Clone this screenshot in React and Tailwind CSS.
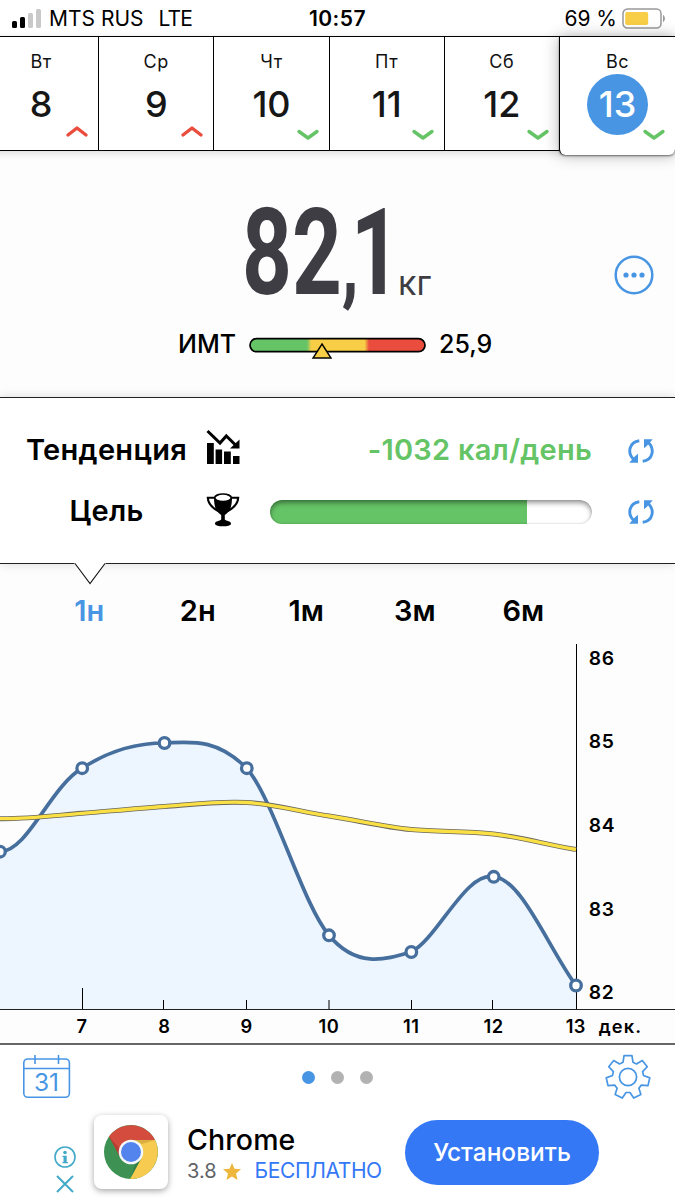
import React from "react";

const days = [
  { name: "Вт", num: "8", up: true },
  { name: "Ср", num: "9", up: true },
  { name: "Чт", num: "10" },
  { name: "Пт", num: "11" },
  { name: "Сб", num: "12" },
  { name: "Вс", num: "13", active: true },
];

const points = [
  [0, 851.7],
  [82.2, 768.2],
  [164.5, 743],
  [246.8, 768.2],
  [329, 935.3],
  [411.3, 952],
  [493.7, 876.8],
  [576, 985.5],
];

const curve =
  "M0,851.7 C28,851 50,787 82.2,768.2 C110,750 136,743 164.5,743 C192,742 216,738 246.8,768.2 C274,800 302,903 329,935.3 C356,968 384,960 411.3,952 C438,938 466,871 493.7,876.8 C521,878 548,947 576,985.5";

const trend =
  "M0,818.7 C28,819 55,815.5 82,813.3 C110,811 137,808.5 164.5,806.5 C192,804.3 219,801 246.7,802.5 C274,804 302,812 329,816 C356,820 384,827 411,829.5 C438,832 466,831 493.5,834 C521,837 548,845 576,849.5";

const gearPath = (() => {
  const out = [];
  for (let i = 0; i < 7; i++) {
    const mid = -90 + (i * 360) / 7;
    [
      [-18.5, 15.6],
      [-10.5, 21.8],
      [10.5, 21.8],
      [18.5, 15.6],
    ].forEach(([d, r]) => {
      const a = ((mid + d) * Math.PI) / 180;
      out.push(`${(24 + r * Math.cos(a)).toFixed(2)},${(24 + r * Math.sin(a)).toFixed(2)}`);
    });
  }
  return `M${out.join("L")}Z`;
})();

function StatusBar() {
  return (
    <header className="flex h-9 items-center justify-between bg-white pl-[11px] pr-[9px] pt-px">
      <div className="flex w-[280px] items-center">
        <svg width="32" height="20" viewBox="0 0 32 20">
          <rect x="1" y="12" width="5" height="7" rx="1.5" fill="#000" />
          <rect x="9" y="8" width="5" height="11" rx="1.5" fill="#000" />
          <rect x="17" y="4" width="5" height="15" rx="1.5" fill="#c9c9c9" />
          <rect x="25" y="0" width="5" height="19" rx="1.5" fill="#c9c9c9" />
        </svg>
        <span className="ml-1.5 whitespace-pre text-[21px]">MTS RUS</span>
        <span className="ml-[15px] text-[21px] tracking-[-0.8px]">LTE</span>
      </div>
      <span className="-translate-x-px text-[21px] font-semibold tracking-[0.5px]">10:57</span>
      <div className="flex w-[280px] items-center justify-end">
        <span className="text-[21px]">69 %</span>
        <svg className="ml-[5px]" width="44" height="22" viewBox="0 0 44 22">
          <rect x="1" y="1" width="38" height="19" rx="4.5" fill="#fff" stroke="#999" strokeWidth="1.5" />
          <rect x="3.2" y="4" width="23" height="13" rx="2" fill="#f7ce46" />
          <path d="M41.5,7.5 q2,3 0,6z" fill="#999" stroke="#999" />
        </svg>
      </div>
    </header>
  );
}

function DayCell({ day }) {
  return (
    <div
      className={
        day.active
          ? "relative z-10 -ml-px flex h-[118px] w-[116.2px] flex-col items-center rounded-b-md border-l border-black bg-white shadow-[0_1px_2px_rgba(0,0,0,0.5),0_0_16px_rgba(0,0,0,0.3)]"
          : "relative flex h-[113px] w-[115.2px] flex-col items-center border-r border-black bg-white"
      }
    >
      <span className="mt-[13px] h-6 text-[18px] leading-6 tracking-[0.6px] text-[#111]">{day.name}</span>
      <div
        className={
          day.active
            ? "flex size-[61px] items-center justify-center rounded-full bg-[#4896e3] text-[36px] font-medium text-white"
            : "flex size-[61px] items-center justify-center text-[36px] font-medium text-[#161616]"
        }
      >
        <span className="-translate-y-px">{day.num}</span>
      </div>
      <svg
        className={day.up ? "absolute right-[9px] top-[87px]" : "absolute right-[9px] top-[90px]"}
        width="24"
        height="14"
        viewBox="0 0 24 14"
        fill="none"
        strokeWidth="3.4"
        strokeLinecap="round"
        strokeLinejoin="round"
      >
        {day.up ? <path d="M3,11 L12,4 L21,11" stroke="#ea4d3d" /> : <path d="M3,4.5 L12,11 L21,4.5" stroke="#65c466" />}
      </svg>
    </div>
  );
}

function Refresh() {
  return (
    <svg width="26" height="24" viewBox="0 0 26 24" fill="none" stroke="#4896e3" strokeWidth="2.9">
      <path d="M11.3,1.7 C1,3 -1,14 5.7,20.5" />
      <path d="M14.7,22.3 C25,21 27,10 20.3,3.5" />
      <path d="M1.3,23.8 L10,23.8 L10,14.8 L7,17.3Z" fill="#4896e3" stroke="none" />
      <path d="M24.7,0.2 L16,0.2 L16,9.2 L19,6.7Z" fill="#4896e3" stroke="none" />
    </svg>
  );
}

function TrendIcon() {
  return (
    <svg width="34" height="36" viewBox="0 0 34 36">
      <path d="M1,14h6.8V35H1zM9.6,20.5h6.5V35H9.6zM18,22.5h6.8V35H18zM27,27h6.5V35H27z" />
      <path d="M1.5,2 L14,14 L20.3,7 L30,16.5" fill="none" stroke="#000" strokeWidth="3" />
      <path d="M33.5,10.5 V19.5 H24Z" />
    </svg>
  );
}

function TrophyIcon() {
  return (
    <svg width="34" height="34" viewBox="0 0 34 34">
      <path d="M8.5,4.8 H1.8 C2,12 7,15.5 13,18.5 M25.5,4.8 H32.2 C32,12 27,15.5 21,18.5" fill="none" stroke="#000" strokeWidth="2.1" />
      <path d="M8,4 C8,12 9,18 15.2,22 V26.5 C14,28 9,28 9,30.7 C9,34.2 25,34.2 25,30.7 C25,28 20,28 18.8,26.5 V22 C25,18 26,12 26,4Z" />
      <ellipse cx="17" cy="4.8" rx="8.3" ry="3.8" fill="#fff" stroke="#000" strokeWidth="1.7" />
    </svg>
  );
}

function Chart() {
  return (
    <svg className="block shrink-0" width="675" height="403" viewBox="0 640 675 403">
      <path d={`${curve} V1009 H0Z`} fill="#edf5fe" />
      <path d="M576.5,644 V1009 M82.5,988 V1009 M163.5,1000 V1009 M246.5,1000 V1009 M329,1000 V1009 M411.5,1000 V1009 M492.5,1000 V1009" stroke="#000" />
      <path d="M0,1009.5 H675" stroke="#222" />
      <path d={curve} fill="none" stroke="#466f9d" strokeWidth="3.7" />
      <path d={trend} fill="none" stroke="#68665c" strokeWidth="5" />
      <path d={trend} fill="none" stroke="#fbe045" strokeWidth="3.3" />
      {points.map(([x, y]) => (
        <circle key={x} cx={x} cy={y} r="5.3" fill="#fff" stroke="#466f9d" strokeWidth="3.3" />
      ))}
      <g fontSize="19.3" fontWeight="600" letterSpacing="0.5">
        {["86", "85", "84", "83", "82"].map((v, i) => (
          <text key={v} x="588.8" y={664.7 + i * 83.6}>
            {v}
          </text>
        ))}
      </g>
      <g fontSize="18.3" fontWeight="600" letterSpacing="0.4" textAnchor="middle">
        {["7", "8", "9", "10", "11", "12", "13"].map((v, i) => (
          <text key={v} x={82 + i * 82.3} y="1033.4">
            {v}
          </text>
        ))}
        <text x="620.5" y="1033.4" letterSpacing="1.1">
          дек.
        </text>
      </g>
    </svg>
  );
}

function ChromeLogo() {
  return (
    <svg width="54" height="54" viewBox="0 0 54 54">
      <circle cx="27" cy="27" r="27" fill="#3d9153" />
      <path d="M27,15 H51 A27,27 0 0 1 26,54 L37.5,33Z" fill="#f6cb4f" />
      <path d="M5,11.5 A27,27 0 0 1 51,15 H27 L16,32Z" fill="#d34c3d" />
      <path d="M27,15 H51 L38,19Z" fill="#c99c35" opacity=".6" />
      <path d="M5,11.5 L16,32 L16,24Z" fill="#9e3027" opacity=".5" />
      <path d="M26,54 L37.5,33 L32,38Z" fill="#246b38" opacity=".5" />
      <circle cx="27" cy="27" r="12.3" fill="#f5f7fb" />
      <circle cx="27" cy="27" r="10" fill="#5383ec" />
    </svg>
  );
}

export default function App() {
  return (
    <div className="flex h-[1200px] w-[675px] flex-col overflow-hidden bg-[#fdfdfd] font-[Inter,'Noto_Sans',sans-serif] text-black">
      <StatusBar />

      <nav className="relative z-10 -ml-4 flex h-[115px] w-[692px] shrink-0 border-y border-black bg-white shadow-[0_2px_8px_rgba(0,0,0,0.14)]">
        {days.map((d) => (
          <DayCell key={d.num} day={d} />
        ))}
      </nav>

      <section className="flex h-[246px] shrink-0 flex-col bg-[#fdfdfd]">
        <div className="mt-[40px] flex h-[118px] items-end pl-[242px] text-[#3e3d44]">
          <div className="flex h-[118px] w-[153px] items-center">
            <span className="origin-left translate-y-[7px] scale-x-[0.725] whitespace-nowrap font-[Roboto,sans-serif] text-[120px] font-bold leading-[118px]">
              82<span className="text-[94px]">,</span>
              <span className="-ml-[11px]">1</span>
            </span>
          </div>
          <span className="mb-[6px] ml-[3px] text-[34px] leading-10">кг</span>
          <svg className="mb-[14px] ml-auto mr-[21px]" width="40" height="40" viewBox="0 0 40 40">
            <circle cx="20" cy="20" r="18.3" fill="none" stroke="#4896e3" strokeWidth="2.5" />
            <circle cx="12" cy="20" r="2.6" fill="#4896e3" />
            <circle cx="20" cy="20" r="2.6" fill="#4896e3" />
            <circle cx="28" cy="20" r="2.6" fill="#4896e3" />
          </svg>
        </div>
        <div className="mt-[19px] flex h-8 items-center pl-[178px] text-[25px] font-medium leading-8">
          <span className="w-[71px]">ИМТ</span>
          <svg width="178" height="30" viewBox="0 -2 178 30">
            <defs>
              <linearGradient id="bmi">
                <stop offset=".325" stopColor="#65c466" />
                <stop offset=".35" stopColor="#f7ce46" />
                <stop offset=".655" stopColor="#f7ce46" />
                <stop offset=".68" stopColor="#ea4d3d" />
              </linearGradient>
            </defs>
            <rect x="1" y="7.7" width="175" height="13" rx="6.5" fill="url(#bmi)" stroke="#000" strokeWidth="1.7" />
            <path d="M73,13 L82,27 H64Z" fill="#f7ce46" stroke="#000" strokeWidth="1.4" />
          </svg>
          <span className="ml-3">25,9</span>
        </div>
      </section>

      <section className="relative z-10 flex h-[167px] shrink-0 flex-col border-y border-[#222] bg-white pt-[21px] shadow-[0_0_10px_rgba(0,0,0,0.14)]">
        <div className="flex h-[61px] items-center">
          <span className="w-[213px] text-center text-[29px] font-semibold tracking-[0.3px]">Тенденция</span>
          <div className="-ml-[7px] w-[34px] -translate-y-[3px]">
            <TrendIcon />
          </div>
          <span className="ml-auto text-[29px] font-semibold tracking-[0.25px] text-[#65c466]">-1032 кал/день</span>
          <div className="ml-[36px] mr-[21px] translate-y-px">
            <Refresh />
          </div>
        </div>
        <div className="flex h-[61px] items-center">
          <span className="w-[213px] text-center text-[29px] font-semibold tracking-[0.2px]">Цель</span>
          <div className="-ml-[7px] w-[34px] -translate-y-px">
            <TrophyIcon />
          </div>
          <div className="relative ml-[30px] h-6 w-[322px] translate-y-px overflow-hidden rounded-full bg-white">
            <div className="h-full w-[257px] bg-[#65c466]" />
            <div className="absolute inset-0 rounded-full shadow-[inset_0_3px_5px_rgba(0,0,0,0.4),inset_0_0_2px_rgba(0,0,0,0.2)]" />
          </div>
          <div className="ml-auto mr-[21px] translate-y-px">
            <Refresh />
          </div>
        </div>
        <svg className="absolute left-[74px] top-[164px]" width="32" height="24" viewBox="0 0 32 24">
          <path d="M0,0 H32 V1.5 H31 L16,21.5 L1,1.5 H0Z" fill="#fff" />
          <path d="M1,1.5 L16,21.5 L31,1.5" fill="none" stroke="#111" strokeWidth="1.1" />
        </svg>
      </section>

      <div className="flex h-[76px] shrink-0 items-center pl-[35px] pt-[18px] text-[29px] font-semibold">
        <span className="w-[108.5px] text-center text-[#4896e3]">1н</span>
        <span className="w-[108.5px] text-center">2н</span>
        <span className="w-[108.5px] text-center">1м</span>
        <span className="w-[108.5px] text-center">3м</span>
        <span className="w-[108.5px] text-center">6м</span>
      </div>

      <Chart />

      <footer className="flex h-[157px] flex-col border-t-2 border-[#666] bg-white">
        <div className="flex h-[64px] items-center justify-between pl-[22px] pr-[23px]">
          <svg width="50" height="46" viewBox="0 0 50 46" fill="none" stroke="#4896e3" strokeWidth="1.6">
            <rect x="1.8" y="5" width="45.6" height="38.3" rx="4" />
            <path d="M2,14.5 H47 M13,1 V10 M36.5,1 V10" />
            <text x="24.5" y="36.7" textAnchor="middle" fontSize="24.5" fontWeight="400" fill="#4896e3" stroke="none">
              31
            </text>
          </svg>
          <div className="flex -translate-x-px gap-4">
            <i className="size-[13px] rounded-full bg-[#4896e3]" />
            <i className="size-[13px] rounded-full bg-[#b2b2b2]" />
            <i className="size-[13px] rounded-full bg-[#b2b2b2]" />
          </div>
          <svg width="48" height="48" viewBox="0 0 48 48" fill="none" stroke="#4896e3" strokeWidth="1.7" strokeLinejoin="round">
            <path d={gearPath} />
            <circle cx="24" cy="24" r="8.6" />
          </svg>
        </div>
        <div className="flex h-[90px] items-start pl-[53px] pt-px">
          <svg className="mt-[35px]" width="24" height="50" viewBox="0 0 24 50" fill="none" stroke="#43a9c8" strokeWidth="1.6">
            <circle cx="12" cy="12" r="10" />
            <circle cx="12" cy="7.5" r="1.8" fill="#43a9c8" stroke="none" />
            <path d="M9.5,10.8 H13.7 V17 H15 V18.3 H9.5 V17 H10.5 V12 H9.5Z" fill="#43a9c8" stroke="none" />
            <path d="M4,31 L20,47 M20,31 L4,47" strokeWidth="2" />
          </svg>
          <div className="ml-[17px] mt-[5px] flex size-[74px] items-center justify-center rounded-lg bg-white shadow-[0_2px_6px_rgba(0,0,0,0.35)]">
            <ChromeLogo />
          </div>
          <div className="ml-[19px] mt-[14px] w-[218px]">
            <div className="text-[28.5px] font-medium leading-8 tracking-[0.1px]">Chrome</div>
            <div className="flex items-center leading-[30px]">
              <span className="text-[20px] text-[#5f6368]">3.8</span>
              <svg className="ml-[6px]" width="18" height="17" viewBox="0 0 18 17">
                <path d="M9,0 L11.5,5.8 L18,6.3 L13,10.5 L14.6,17 L9,13.5 L3.4,17 L5,10.5 L0,6.3 L6.5,5.8Z" fill="#eeb63c" />
              </svg>
              <span className="ml-[14px] whitespace-nowrap text-[21px] tracking-[-0.4px] text-[#3478f6]">БЕСПЛАТНО</span>
            </div>
          </div>
          <button className="mt-[10px] h-[65px] w-[194px] rounded-full bg-[#3478f6] pb-px text-[24.5px] font-medium text-white">Установить</button>
        </div>
      </footer>
    </div>
  );
}
